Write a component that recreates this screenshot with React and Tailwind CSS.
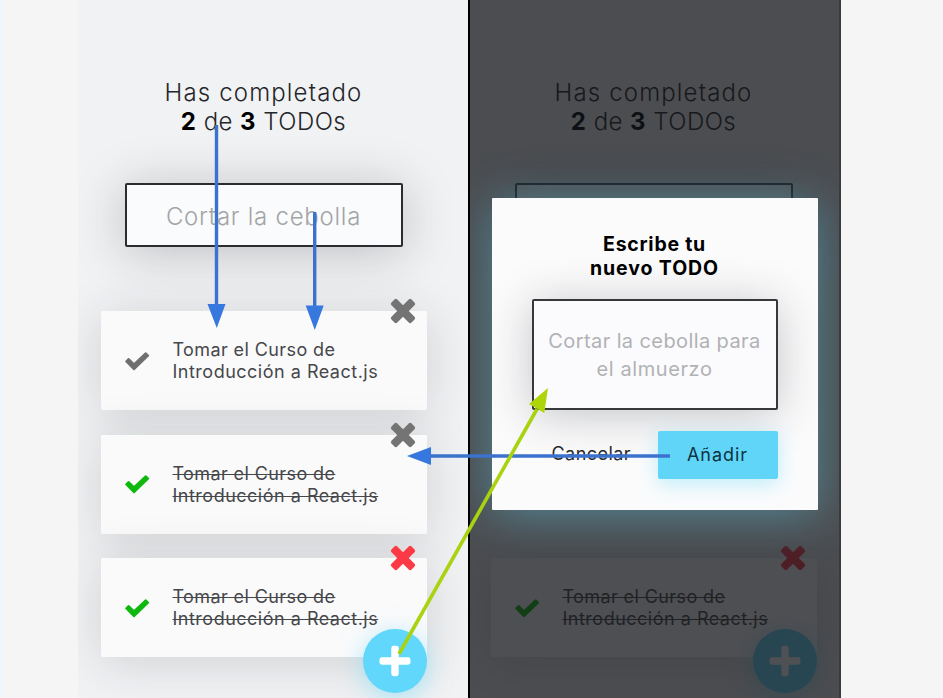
function CheckIcon({ className }) {
  return (
    <svg viewBox="0 0 26 20" className={"h-5 w-[26px] " + className} fill="currentColor" stroke="currentColor" strokeWidth="2" strokeLinejoin="round">
      <path d="M2.2 10.4 4.6 8 10 13.2 21.7 2.2 24.2 4.6 10 18.2Z" />
    </svg>
  );
}

function CrossIcon({ className }) {
  return (
    <svg viewBox="-13 -13 26 26" className={"size-[26px] " + className} fill="currentColor">
      <rect x="-14.2" y="-4.1" width="28.4" height="8.2" rx="2" transform="rotate(45)" />
      <rect x="-14.2" y="-4.1" width="28.4" height="8.2" rx="2" transform="rotate(-45)" />
    </svg>
  );
}

function PlusIcon() {
  return (
    <svg viewBox="0 0 32 32" className="size-8" fill="currentColor">
      <rect x="0.5" y="12.3" width="31" height="7.4" rx="2.4" />
      <rect x="12.3" y="0.8" width="7.4" height="30.4" rx="2.4" />
    </svg>
  );
}

function TodoItem({ done, checkColor, crossColor }) {
  return (
    <li className="relative flex h-[99px] w-[326px] items-center rounded-[1px] bg-[#fafafb] pl-[23px] shadow-[0_5px_50px_rgba(32,35,41,0.16)]">
      <CheckIcon className={checkColor} />
      <p className={"mt-px ml-[23px] whitespace-nowrap text-[18px] leading-[22px] text-[#46474a] " + (done ? "line-through decoration-[1px]" : "")}>
        <span className="tracking-[0.4px]">Tomar el Curso de</span>
        <br />
        <span className="tracking-[0.5px]">Introducción a React.js</span>
      </p>
      <CrossIcon className={"absolute -top-[13px] right-[11px] " + crossColor} />
    </li>
  );
}

const todos = [
  { done: false, checkColor: "text-[#6f6f6f]", crossColor: "text-[#747474]" },
  { done: true, checkColor: "text-[#0fb80f]", crossColor: "text-[#747474]" },
  { done: true, checkColor: "text-[#0fb80f]", crossColor: "text-[#fb3a46]" },
];

// With the modal open, rows hidden behind it keep their space but skip their content.
function Phone({ covered = false }) {
  return (
    <div className="relative flex h-[698px] w-[371px] shrink-0 flex-col items-center pt-[78px]">
      <h1 className="text-center text-[24px] leading-[29px] font-light text-[#25262a]">
        <span className="tracking-[1.15px]">Has completado</span>
        <br />
        <span className="tracking-[0.45px]">
          <b className="font-bold text-black">2</b> de <b className="font-bold text-black">3</b> TODOs
        </span>
      </h1>
      <div className="mt-[47px] flex h-16 w-[278px] items-center justify-center rounded-[2px] border-2 border-[#2b2c30] bg-[#fafbfc] pt-[3px] text-[24px] font-light tracking-[0.75px] text-[#a3a4a6] shadow-[0_5px_50px_rgba(32,35,41,0.25)]">
        {!covered && "Cortar la cebolla"}
      </div>
      <ul className="mt-16 flex flex-col gap-[24.5px]">
        {todos.map((t, i) =>
          covered && i < 2 ? <li key={i} className="h-[99px] w-[326px]" /> : <TodoItem key={i} {...t} />
        )}
      </ul>
      <button className="absolute top-[629px] right-[22px] flex size-16 items-center justify-center rounded-full bg-[#61d7fb] text-white shadow-[0_5px_25px_rgba(97,218,250,0.5)]">
        <PlusIcon />
      </button>
    </div>
  );
}

function Modal() {
  return (
    <div className="absolute inset-0 bg-[#141619]/75">
      <div className="mt-[198px] ml-[23.5px] flex h-[312px] w-[326px] flex-col items-center rounded-[1px] bg-[#fbfbfc] pt-[34px] shadow-[0_4px_48px_rgba(97,218,250,0.42)]">
        <h2 className="text-center text-[19.5px] leading-[24px] font-bold text-black">
          <span className="tracking-[0.75px]">Escribe tu</span>
          <br />
          <span className="tracking-[0.9px]">nuevo TODO</span>
        </h2>
        <div className="mt-[19px] flex h-[111px] w-[246px] items-center justify-center rounded-[2px] border-2 border-[#37383a] bg-[#fbfbfd] text-center text-[20px] leading-[28px] whitespace-nowrap text-[#b1b2b4] shadow-[0_5px_45px_rgba(32,35,41,0.25)]">
          <p>
            <span className="tracking-[0.4px]">Cortar la cebolla para</span>
            <br />
            <span className="tracking-[0.6px]">el almuerzo</span>
          </p>
        </div>
        <div className="mt-[21px] flex w-[246px] items-center justify-between text-[18px] text-[#27282b]">
          <span className="-mt-[3px] ml-[20px] tracking-[0.45px]">Cancelar</span>
          <button className="h-12 w-[120px] rounded-[2px] bg-[#61d5f8] pb-[2px] tracking-[0.95px] text-[#0c3341] shadow-[0_5px_20px_rgba(97,218,250,0.4)]">
            Añadir
          </button>
        </div>
      </div>
    </div>
  );
}

function Arrows() {
  return (
    <svg viewBox="0 0 943 698" className="pointer-events-none absolute inset-0 h-[698px] w-[943px]" fill="none">
      <g stroke="#3b72ce" strokeWidth="3.4">
        <path d="M216.5 125V308M314.7 212V308M430 456H670" />
      </g>
      <g fill="#3678de">
        <path d="M207.5 304H225.5L216.8 328ZM305.7 305.500H323.7L314.8 330ZM431 447V465L407 456Z" />
      </g>
      <path d="M399 654 537 409" stroke="#a9d210" strokeWidth="3.6" />
      <path d="M548 388 544.300 413 529 404Z" fill="#add50a" />
    </svg>
  );
}

export default function App() {
  return (
    <main className="relative flex h-[698px] w-[943px] overflow-hidden bg-[#f5f5f5] font-['Inter','Liberation_Sans',sans-serif]">
      <div className="h-full w-1 bg-[#f0f6fc]" />
      <section className="ml-[74px] flex w-[390px] justify-start overflow-hidden bg-[#f1f2f4]">
        <Phone />
      </section>
      <section className="relative w-[373px] overflow-hidden bg-[#f1f2f4]">
        <Phone covered />
        <Modal />
        <div className="absolute inset-0 border-x-2 border-l-black border-r-[#3a3b40]" />
      </section>
      <Arrows />
    </main>
  );
}
